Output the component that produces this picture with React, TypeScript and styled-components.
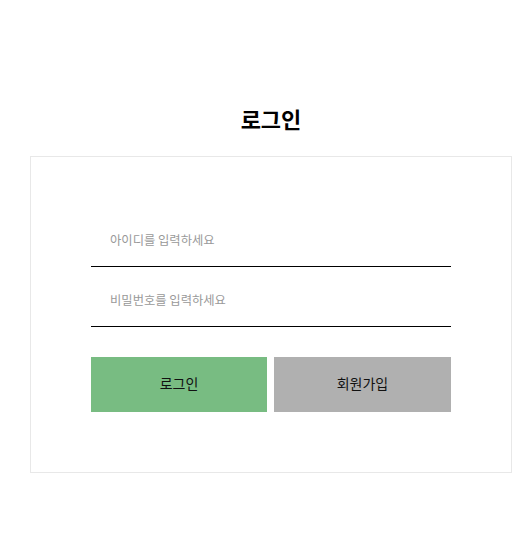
import React from "react";
import styled, { createGlobalStyle } from "styled-components";

const GlobalStyle = createGlobalStyle`
  html, body {
    margin: 0;
    padding: 0;
    background: #ffffff;
    font-family: "Noto Sans CJK KR", "Noto Sans", sans-serif;
  }
  * { box-sizing: border-box; }
`;

const Page = styled.div`
  padding: 102px 0 0 30px;
`;

const Wrapper = styled.div`
  width: 482px;
`;

const Title = styled.h2`
  margin: 0 0 22px;
  text-align: center;
  font-size: 22px;
  line-height: 32px;
  font-weight: 700;
  color: #000;
`;

const Card = styled.form`
  border: 1px solid #e8e8e8;
  padding: 50px 60px 60px;
  display: flex;
  flex-direction: column;
`;

const Input = styled.input`
  height: 60px;
  width: 100%;
  border: none;
  border-bottom: 1px solid #000;
  padding: 6px 0 0 19px;
  font-family: inherit;
  font-size: 12.3px;
  color: #222;
  outline: none;
  background: transparent;
  &::placeholder {
    color: #999;
  }
`;

const ButtonRow = styled.div`
  display: flex;
  gap: 7px;
  margin-top: 30px;
`;

const Button = styled.button<{ $variant: "primary" | "secondary" }>`
  width: ${(p) => (p.$variant === "primary" ? "176px" : "177px")};
  height: 55px;
  border: none;
  padding: 0 0 4px;
  font-family: inherit;
  font-size: 14px;
  color: #111;
  cursor: pointer;
  background: ${(p) => (p.$variant === "primary" ? "#78bc82" : "#b0b0b0")};
`;

export default function App() {
  return (
    <>
      <GlobalStyle />
      <Page>
        <Wrapper>
          <Title>로그인</Title>
          <Card onSubmit={(e) => e.preventDefault()}>
            <Input type="text" placeholder="아이디를 입력하세요" />
            <Input type="password" placeholder="비밀번호를 입력하세요" />
            <ButtonRow>
              <Button type="submit" $variant="primary">로그인</Button>
              <Button type="button" $variant="secondary">회원가입</Button>
            </ButtonRow>
          </Card>
        </Wrapper>
      </Page>
    </>
  );
}
